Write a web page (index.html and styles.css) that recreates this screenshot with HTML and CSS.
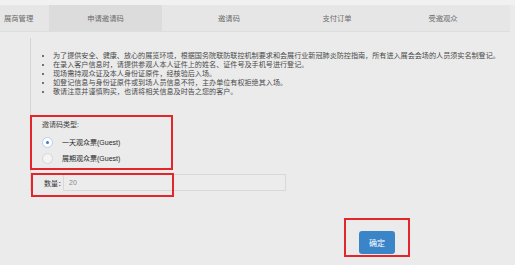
FILE: index.html
```html
<!DOCTYPE html>
<html lang="zh-CN">
<head>
    <meta charset="UTF-8">
    <title>申请邀请码</title>
    <link rel="stylesheet" href="styles.css">
</head>
<body>
    <div class="top_strip"></div>

    <div class="tab_bar">
        <div class="tab_title">展商管理</div>
        <div class="tab tab_apply active">申请邀请码</div>
        <div class="tab tab_codes">邀请码</div>
        <div class="tab tab_orders">支付订单</div>
        <div class="tab tab_guests">受邀观众</div>
    </div>

    <div class="panel">
        <ul class="notice_list">
            <li>为了提供安全、健康、放心的展览环境，根据国务院联防联控机制要求和会展行业新冠肺炎防控指南，所有进入展会会场的人员须实名制登记。</li>
            <li>在录入客户信息时，请提供参观人本人证件上的姓名、证件号及手机号进行登记。</li>
            <li>现场需持观众证及本人身份证原件，经核验后入场。</li>
            <li>如登记信息与身份证原件或到场人员信息不符，主办单位有权拒绝其入场。</li>
            <li>敬请注意并谨慎购买，也请将相关信息及时告之您的客户。</li>
        </ul>

        <div class="type_group">
            <div class="group_label">邀请码类型:</div>
            <label class="radio_row">
                <span class="radio checked"></span>
                <span>一天观众票(Guest)</span>
            </label>
            <label class="radio_row">
                <span class="radio"></span>
                <span>展期观众票(Guest)</span>
            </label>
        </div>

        <div class="qty_row">
            <span class="qty_label">数量：</span>
            <div class="qty_input">20</div>
            <span class="mark"></span>
        </div>
    </div>

    <div class="actions">
        <div class="action_box">
            <button class="btn_submit">确定</button>
        </div>
    </div>
</body>
</html>
```

FILE: styles.css
```css
body {
    margin: 0;
    background: #ebebeb;
    font-family: "Liberation Sans", "Noto Sans CJK SC", sans-serif;
    font-size: 7px;
    color: #555;
}

.top_strip {
    height: 5px;
    background: #f1f1f1;
}

.tab_bar {
    display: flex;
    height: 27px;
    width: 510px;
    background: #e6e6e6;
    border-bottom: 1px solid #dedede;
    box-sizing: border-box;
    color: #6a6a6a;
    font-size: 7.3px;
}

.tab_title {
    width: 49px;
    padding-left: 4px;
    box-sizing: border-box;
    line-height: 27px;
}

.tab {
    text-align: center;
    line-height: 27px;
}

.tab.active {
    background: #dcdcdc;
}

.tab_apply {
    width: 113px;
}

.tab_codes {
    width: 134px;
}

.tab_orders {
    width: 82px;
}

.tab_guests {
    width: 130px;
}

.panel {
    margin: 6px 0 0 30px;
    border-left: 1px solid #d4d4d4;
    padding-top: 14px;
}

.notice_list {
    margin: 0;
    padding-left: 22px;
    line-height: 9px;
    font-size: 7.1px;
    color: #4a4a4a;
}

.type_group {
    width: 143px;
    height: 55px;
    margin: 18px 0 0 -1px;
    border: 2px solid #e3262c;
    box-sizing: border-box;
    padding: 3px 0 0 10px;
    color: #3a3a3a;
}

.group_label {
    line-height: 9px;
    margin-bottom: 5px;
}

.radio_row {
    display: flex;
    align-items: center;
    height: 16px;
    color: #2a2a2a;
}

.radio {
    width: 11px;
    height: 11px;
    border: 1px solid #d6d6d6;
    border-radius: 50%;
    background: #f4f4f4;
    box-sizing: border-box;
    margin-right: 9px;
    position: relative;
}

.radio.checked {
    border-color: #b8cfe6;
    background: #fff;
}

.radio.checked::after {
    content: "";
    position: absolute;
    left: 3px;
    top: 3px;
    width: 3px;
    height: 3px;
    border-radius: 50%;
    background: #3b7fc4;
}

.qty_row {
    position: relative;
    display: flex;
    align-items: center;
    margin-top: 4px;
    padding-left: 13px;
    color: #333;
}

.qty_label {
    width: 19px;
    white-space: nowrap;
}

.qty_input {
    width: 223px;
    height: 17px;
    border: 1px solid #d8d8d8;
    box-sizing: border-box;
    background: #ececec;
    padding-left: 5px;
    line-height: 15px;
    color: #888;
}

.mark {
    position: absolute;
    left: 0;
    top: -1px;
    width: 143px;
    height: 24px;
    border: 2px solid #e3262c;
    box-sizing: border-box;
}

.actions {
    display: flex;
    margin-top: 27px;
    padding-left: 344px;
}

.action_box {
    border: 2px solid #e3262c;
    padding: 11px 13px 1px 13px;
}

.btn_submit {
    display: block;
    width: 36px;
    height: 23px;
    border: 0;
    border-radius: 3px;
    background: #3a85c8;
    color: #fff;
    font-family: "Liberation Sans", "Noto Sans CJK SC", sans-serif;
    font-size: 8px;
    padding: 0;
}
```
